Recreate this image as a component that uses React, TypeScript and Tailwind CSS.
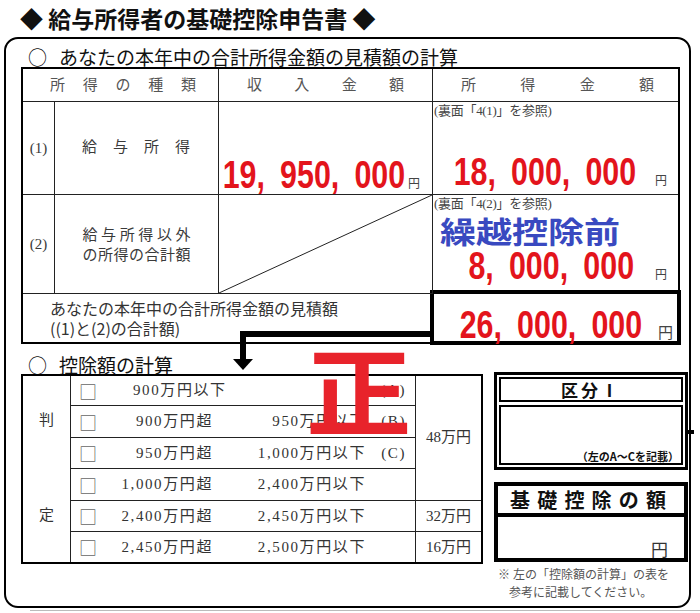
import React from "react";

const gothic = "font-['Noto_Sans_CJK_JP',sans-serif]";
const mincho = "font-['Liberation_Serif','Noto_Sans_CJK_JP',serif]";
const numeric = "font-['Liberation_Sans','Noto_Sans_CJK_JP',sans-serif]";

function Spread({ text, className }: { text: string; className: string }) {
  return (
    <div className={`flex justify-between ${className}`}>
      {Array.from(text).map((ch, i) => (
        <span key={i}>{ch}</span>
      ))}
    </div>
  );
}

function Amount({
  value,
  yenClass = "text-[12px]",
  gap = "ml-[3px]",
}: {
  value: string;
  yenClass?: string;
  gap?: string;
}) {
  return (
    <div className="flex items-baseline">
      <span
        className={`inline-block origin-right scale-x-[0.8] whitespace-pre text-[38px] font-bold leading-none text-[#e3141c] ${numeric}`}
      >
        {value}
      </span>
      <span className={`${gap} ${yenClass} leading-none text-[#444] ${mincho}`}>円</span>
    </div>
  );
}

function Heading({ text, className }: { text: string; className: string }) {
  return (
    <div className={`flex items-center gap-[12px] pl-[22px] text-[19px] leading-none text-[#111] ${className}`}>
      <span className="text-[19px]">○</span>
      <span>{text}</span>
    </div>
  );
}

function IncomeTable() {
  return (
    <div className="ml-[15px] grid w-[659px] grid-cols-[32px_164px_214px_245px] grid-rows-[33px_93px_99px_48px] border-2 border-black text-[#3a3a3a]">
      {/* header */}
      <Spread
        text="所得の種類"
        className={`col-span-2 items-center border-b border-r border-[#222] pl-[27px] pr-[22px] text-[15px] text-[#555] ${mincho}`}
      />
      <Spread
        text="収入金額"
        className={`items-center border-b border-r border-[#222] px-[28px] text-[15px] text-[#555] ${mincho}`}
      />
      <Spread
        text="所得金額"
        className={`items-center border-b border-[#222] pl-[28px] pr-[24px] text-[15px] text-[#555] ${mincho}`}
      />

      {/* (1) */}
      <div className={`flex items-center justify-center border-b border-r border-[#222] text-[15px] ${mincho}`}>(1)</div>
      <Spread
        text="給与所得"
        className={`items-center border-b border-r border-[#222] pl-[27px] pr-[28px] pb-[2px] text-[15px] ${mincho}`}
      />
      <div className="flex items-end justify-end border-b border-r border-[#222] pr-[12px]">
        <Amount value={"19,\u2002950,\u2002000"} />
      </div>
      <div className={`flex flex-col border-b border-[#222] ${mincho}`}>
        <div className="pl-[1px] pt-[2px] text-[13px] leading-none tracking-[-0.3px] text-[#444]">
          (裏面「4(1)」を参照)
        </div>
        <div className="mt-auto flex justify-end pb-[3px] pr-[11px]">
          <Amount value={"18,\u2002000,\u2002000"} gap="ml-[19px]" />
        </div>
      </div>

      {/* (2) */}
      <div className={`flex items-center justify-center border-b border-r border-[#222] text-[15px] ${mincho}`}>(2)</div>
      <div className={`flex flex-col items-center justify-center gap-[3px] border-b border-r border-[#222] pt-[2px] text-[15px] leading-[17px] ${mincho}`}>
        <Spread text="給与所得以外" className="w-[108px]" />
        <Spread text="の所得の合計額" className="w-[108px]" />
      </div>
      <div className="relative border-b border-r border-[#222]">
        <svg className="absolute inset-0 h-full w-full" viewBox="0 0 100 100" preserveAspectRatio="none">
          <line x1="0" y1="100" x2="100" y2="0" stroke="#222" strokeWidth="1" vectorEffect="non-scaling-stroke" />
        </svg>
      </div>
      <div className={`flex flex-col border-b border-[#222] ${mincho}`}>
        <div className="pl-[1px] pt-[2px] text-[13px] leading-none tracking-[-0.3px] text-[#444]">
          (裏面「4(2)」を参照)
        </div>
        <div
          className={`ml-[7px] mt-[5px] inline-block origin-left scale-x-[1.2] text-[30px] font-bold leading-none text-[#3949c0] ${gothic}`}
        >
          繰越控除前
        </div>
        <div className="mt-auto flex justify-end pb-[8px] pr-[11px]">
          <Amount value={"8,\u2002000,\u2002000"} gap="ml-[21px]" />
        </div>
      </div>

      {/* total */}
      <div className="col-span-3 flex flex-col justify-center border-r border-[#222] pl-[27px] pb-[1px] text-[16px] leading-[20px] text-[#333]">
        <div>あなたの本年中の合計所得金額の見積額</div>
        <div>((1)と(2)の合計額)</div>
      </div>
      <div className="-mb-[3px] -ml-[3px] -mr-[3px] -mt-[4px] flex items-end justify-end border-[4px] border-black bg-white pr-[4px]">
        <div className="-mb-[3px]">
          <Amount value={"26,\u2002000,\u2002000"} yenClass="text-[15px]" gap="ml-[16px]" />
        </div>
      </div>
    </div>
  );
}

const rows = [
  { a: "900万円以下", b: "", c: "(A)", first: true },
  { a: "900万円超", b: "950万円以下", c: "(B)" },
  { a: "950万円超", b: "1,000万円以下", c: "(C)" },
  { a: "1,000万円超", b: "2,400万円以下", c: "" },
  { a: "2,400万円超", b: "2,450万円以下", c: "" },
  { a: "2,450万円超", b: "2,500万円以下", c: "" },
];

function DeductionTable() {
  return (
    <div
      className={`ml-[15px] grid w-[462px] grid-cols-[48px_345px_65px] grid-rows-[30px_32px_31px_32px_31px_30px] border-2 border-black text-[15px] leading-none text-[#333] ${mincho}`}
    >
      <div className="row-span-6 flex flex-col items-center border-r border-[#222] pt-[37px]">
        <span>判</span>
        <span className="mt-[80px]">定</span>
      </div>
      {rows.map((r, i) => (
        <React.Fragment key={r.a}>
          <div
            className={`col-start-2 flex items-center whitespace-nowrap border-r border-[#222] pl-[8px] tracking-[1.6px] ${
              i < 5 ? "border-b" : ""
            }`}
          >
            <span className={`w-[18px] text-[18px] tracking-normal text-[#666] ${gothic}`}>□</span>
            {r.first ? (
              <span className="w-[116px] pl-[36px]">{r.a}</span>
            ) : (
              <span className="w-[116px] text-right">{r.a}</span>
            )}
            <span className="w-[153px] text-right">{r.b}</span>
            <span className="w-[40px] text-right">{r.c}</span>
          </div>
          {i === 0 && (
            <div className="row-span-4 flex items-center justify-center border-b border-[#222] pb-[2px]">48万円</div>
          )}
          {i === 4 && <div className="flex items-center justify-center border-b border-[#222]">32万円</div>}
          {i === 5 && <div className="flex items-center justify-center">16万円</div>}
        </React.Fragment>
      ))}
    </div>
  );
}

function RightColumn() {
  return (
    <div className="-mt-[2px] ml-[11px] flex w-[194px] flex-col">
      <div className="flex h-[98px] flex-col gap-[3px] border-[3px] border-black p-[2px]">
        <div className="flex h-[25px] items-center justify-center border-2 border-black text-[17px] font-bold leading-none tracking-[3px] text-[#111]">
          区分Ⅰ
        </div>
        <div className="flex flex-1 items-end justify-end border-2 border-black pb-[1px] pr-[2px] text-[11px] font-bold leading-none text-[#111]">
          （左のA～Cを記載）
        </div>
      </div>
      <div className="mt-[12px] flex h-[80px] flex-col border-[4px] border-black">
        <Spread
          text="基礎控除の額"
          className="h-[31px] items-center border-b-[4px] border-black pl-[12px] pr-[18px] text-[20px] font-bold leading-none text-[#111]"
        />
        <div className={`flex flex-1 items-end justify-end pb-[1px] pr-[16px] text-[17px] leading-none text-[#333] ${gothic}`}>
          円
        </div>
      </div>
      <div className={`mt-[4px] pl-[4px] text-[12px] leading-[18px] text-[#555] ${mincho}`}>
        <div>※ 左の「控除額の計算」の表を</div>
        <div className="pl-[11px]">参考に記載してください。</div>
      </div>
    </div>
  );
}

export default function App() {
  return (
    <div className={`relative h-[613px] w-[700px] overflow-hidden bg-white text-[#333] ${gothic}`}>
      <div className="flex h-[37px] items-center pl-[20px] text-[23px] font-bold leading-none text-[#111]">
        ◆ 給与所得者の基礎控除申告書 ◆
      </div>
      <div className="ml-[4px] h-[571px] w-[687px] rounded-[14px] border-2 border-black">
        <Heading text="あなたの本年中の合計所得金額の見積額の計算" className="h-[28px] pt-[6px]" />
        <IncomeTable />
        <Heading text="控除額の計算" className="h-[30px] pt-[10px]" />
        <div className="flex items-start">
          <DeductionTable />
          <RightColumn />
        </div>
      </div>
      <div className="ml-[30px] mt-[2px] h-px bg-[#bbb]" />

      {/* arrow from the total box down to the deduction table */}
      <svg className="pointer-events-none absolute left-0 top-0" width="700" height="613">
        <rect x="240" y="331" width="193" height="6" fill="#000" />
        <rect x="240" y="331" width="6" height="29" fill="#000" />
        <polygon points="233,359 253,359 243,370" fill="#000" />
      </svg>

      {/* red stamp */}
      <div className="pointer-events-none absolute left-[306px] top-[339px] origin-left scale-x-[1.1] text-[96px] font-bold leading-none text-[#e8232b]">
        正
      </div>

      {/* small tick on the right edge */}
      <div className="absolute left-[686px] top-[430px] h-[4px] w-[8px] bg-black" />
    </div>
  );
}
